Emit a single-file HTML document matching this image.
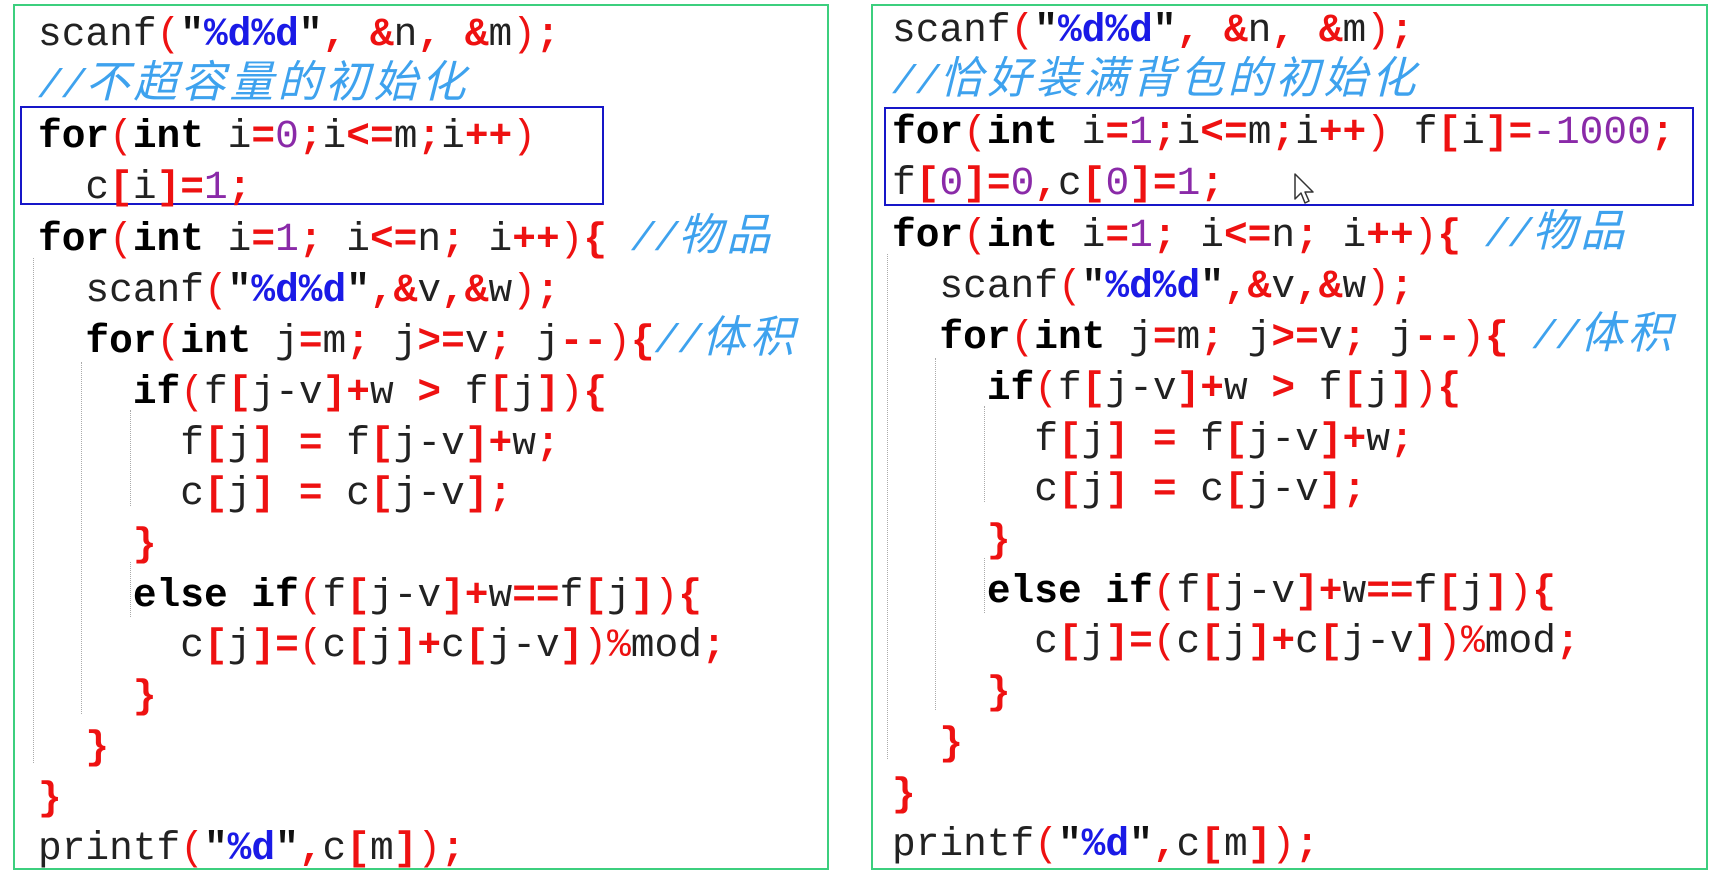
<!DOCTYPE html>
<html><head><meta charset="utf-8"><style>
html,body{margin:0;padding:0;background:#fff;width:1720px;height:877px;overflow:hidden;position:relative}
.box{position:absolute;border:2px solid #3ccf7e;box-sizing:border-box}
.blue{position:absolute;border:2px solid #1616c8;box-sizing:border-box}
pre{position:absolute;margin:0;font-family:"Liberation Mono","Noto Sans CJK SC",monospace;font-size:39.5px;line-height:50.7px;color:#222}
.k{font-weight:bold;color:#000}
.p{color:#ee1111;font-weight:bold}
.pr{color:#ee1111}
.n{color:#8a2aa8}
.s{color:#1a1ae6;font-weight:bold}
.q{color:#111;font-weight:bold}
.c{color:#3ea2ee;font-style:italic;font-family:"Liberation Mono","Noto Sans CJK SC",monospace}
.c i{font-size:44px;letter-spacing:4px;font-style:italic}
.g{position:absolute;border-left:1px dotted #aaa;width:0}
</style></head><body>
<div class="box" style="left:13px;top:4px;width:816px;height:866px"></div>
<div class="box" style="left:871px;top:4px;width:837px;height:866px"></div>
<div class="blue" style="left:20px;top:106px;width:584px;height:99px"></div>
<div class="blue" style="left:884px;top:107px;width:810px;height:99px"></div>

<div class="g" style="left:33px;top:258px;height:505px"></div>
<div class="g" style="left:81px;top:362px;height:352px"></div>
<div class="g" style="left:130px;top:410px;height:96px"></div>
<div class="g" style="left:130px;top:562px;height:55px"></div>
<div class="g" style="left:887px;top:254px;height:505px"></div>
<div class="g" style="left:935px;top:358px;height:352px"></div>
<div class="g" style="left:984px;top:406px;height:96px"></div>
<div class="g" style="left:984px;top:558px;height:55px"></div>

<pre style="left:38px;top:10px">scanf<span class="pr">(</span><span class="q">"</span><span class="s">%d%d</span><span class="q">"</span><span class="p">,</span> <span class="p">&amp;</span>n<span class="p">,</span> <span class="p">&amp;</span>m<span class="pr">)</span><span class="p">;</span>
<span class="c">//<i>不超容量的初始化</i></span>
<span class="k">for</span><span class="pr">(</span><span class="k">int</span> i<span class="p">=</span><span class="n">0</span><span class="p">;</span>i<span class="p">&lt;=</span>m<span class="p">;</span>i<span class="p">++</span><span class="pr">)</span>
  c<span class="p">[</span>i<span class="p">]=</span><span class="n">1</span><span class="p">;</span>
<span class="k">for</span><span class="pr">(</span><span class="k">int</span> i<span class="p">=</span><span class="n">1</span><span class="p">;</span> i<span class="p">&lt;=</span>n<span class="p">;</span> i<span class="p">++</span><span class="pr">)</span><span class="p">{</span> <span class="c">//<i>物品</i></span>
  scanf<span class="pr">(</span><span class="q">"</span><span class="s">%d%d</span><span class="q">"</span><span class="p">,&amp;</span>v<span class="p">,&amp;</span>w<span class="pr">)</span><span class="p">;</span>
  <span class="k">for</span><span class="pr">(</span><span class="k">int</span> j<span class="p">=</span>m<span class="p">;</span> j<span class="p">&gt;=</span>v<span class="p">;</span> j<span class="p">--</span><span class="pr">)</span><span class="p">{</span><span class="c">//<i>体积</i></span>
    <span class="k">if</span><span class="pr">(</span>f<span class="p">[</span>j-v<span class="p">]+</span>w <span class="p">&gt;</span> f<span class="p">[</span>j<span class="p">]</span><span class="pr">)</span><span class="p">{</span>
      f<span class="p">[</span>j<span class="p">]</span> <span class="p">=</span> f<span class="p">[</span>j-v<span class="p">]+</span>w<span class="p">;</span>
      c<span class="p">[</span>j<span class="p">]</span> <span class="p">=</span> c<span class="p">[</span>j-v<span class="p">];</span>
    <span class="p">}</span>
    <span class="k">else if</span><span class="pr">(</span>f<span class="p">[</span>j-v<span class="p">]+</span>w<span class="p">==</span>f<span class="p">[</span>j<span class="p">]</span><span class="pr">)</span><span class="p">{</span>
      c<span class="p">[</span>j<span class="p">]=</span><span class="pr">(</span>c<span class="p">[</span>j<span class="p">]+</span>c<span class="p">[</span>j-v<span class="p">]</span><span class="pr">)%</span>mod<span class="p">;</span>
    <span class="p">}</span>
  <span class="p">}</span>
<span class="p">}</span>
printf<span class="pr">(</span><span class="q">"</span><span class="s">%d</span><span class="q">"</span><span class="p">,</span>c<span class="p">[</span>m<span class="p">]</span><span class="pr">)</span><span class="p">;</span></pre>

<pre style="left:892px;top:6px">scanf<span class="pr">(</span><span class="q">"</span><span class="s">%d%d</span><span class="q">"</span><span class="p">,</span> <span class="p">&amp;</span>n<span class="p">,</span> <span class="p">&amp;</span>m<span class="pr">)</span><span class="p">;</span>
<span class="c">//<i>恰好装满背包的初始化</i></span>
<span class="k">for</span><span class="pr">(</span><span class="k">int</span> i<span class="p">=</span><span class="n">1</span><span class="p">;</span>i<span class="p">&lt;=</span>m<span class="p">;</span>i<span class="p">++</span><span class="pr">)</span> f<span class="p">[</span>i<span class="p">]=</span><span class="n">-1000</span><span class="p">;</span>
f<span class="p">[</span><span class="n">0</span><span class="p">]=</span><span class="n">0</span><span class="p">,</span>c<span class="p">[</span><span class="n">0</span><span class="p">]=</span><span class="n">1</span><span class="p">;</span>
<span class="k">for</span><span class="pr">(</span><span class="k">int</span> i<span class="p">=</span><span class="n">1</span><span class="p">;</span> i<span class="p">&lt;=</span>n<span class="p">;</span> i<span class="p">++</span><span class="pr">)</span><span class="p">{</span> <span class="c">//<i>物品</i></span>
  scanf<span class="pr">(</span><span class="q">"</span><span class="s">%d%d</span><span class="q">"</span><span class="p">,&amp;</span>v<span class="p">,&amp;</span>w<span class="pr">)</span><span class="p">;</span>
  <span class="k">for</span><span class="pr">(</span><span class="k">int</span> j<span class="p">=</span>m<span class="p">;</span> j<span class="p">&gt;=</span>v<span class="p">;</span> j<span class="p">--</span><span class="pr">)</span><span class="p">{</span> <span class="c">//<i>体积</i></span>
    <span class="k">if</span><span class="pr">(</span>f<span class="p">[</span>j-v<span class="p">]+</span>w <span class="p">&gt;</span> f<span class="p">[</span>j<span class="p">]</span><span class="pr">)</span><span class="p">{</span>
      f<span class="p">[</span>j<span class="p">]</span> <span class="p">=</span> f<span class="p">[</span>j-v<span class="p">]+</span>w<span class="p">;</span>
      c<span class="p">[</span>j<span class="p">]</span> <span class="p">=</span> c<span class="p">[</span>j-v<span class="p">];</span>
    <span class="p">}</span>
    <span class="k">else if</span><span class="pr">(</span>f<span class="p">[</span>j-v<span class="p">]+</span>w<span class="p">==</span>f<span class="p">[</span>j<span class="p">]</span><span class="pr">)</span><span class="p">{</span>
      c<span class="p">[</span>j<span class="p">]=</span><span class="pr">(</span>c<span class="p">[</span>j<span class="p">]+</span>c<span class="p">[</span>j-v<span class="p">]</span><span class="pr">)%</span>mod<span class="p">;</span>
    <span class="p">}</span>
  <span class="p">}</span>
<span class="p">}</span>
printf<span class="pr">(</span><span class="q">"</span><span class="s">%d</span><span class="q">"</span><span class="p">,</span>c<span class="p">[</span>m<span class="p">]</span><span class="pr">)</span><span class="p">;</span></pre>

<svg style="position:absolute;left:1294px;top:173px" width="26" height="36" viewBox="0 0 26 36"><path d="M1 1 L1 26 L7 20 L11 30 L15 28 L11 19 L19 19 Z" fill="#fff" stroke="#333" stroke-width="1.5" stroke-linejoin="round"/></svg>
</body></html>
